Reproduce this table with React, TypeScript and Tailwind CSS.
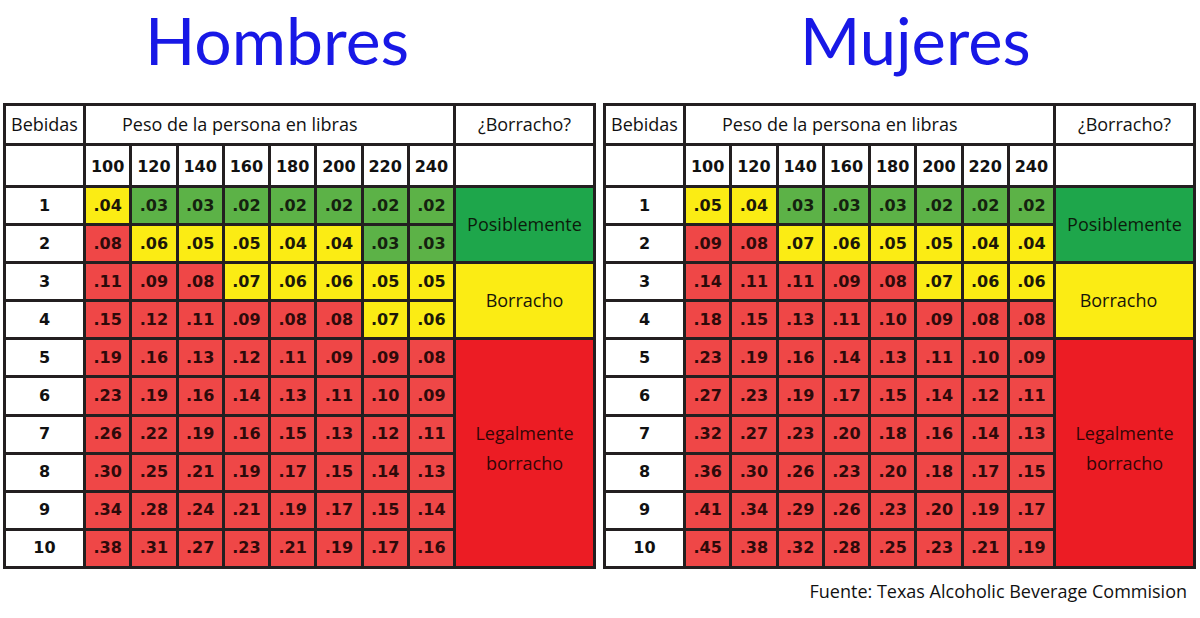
const WEIGHTS = ['100', '120', '140', '160', '180', '200', '220', '240'];

const MEN = [
  ['.04', '.03', '.03', '.02', '.02', '.02', '.02', '.02'],
  ['.08', '.06', '.05', '.05', '.04', '.04', '.03', '.03'],
  ['.11', '.09', '.08', '.07', '.06', '.06', '.05', '.05'],
  ['.15', '.12', '.11', '.09', '.08', '.08', '.07', '.06'],
  ['.19', '.16', '.13', '.12', '.11', '.09', '.09', '.08'],
  ['.23', '.19', '.16', '.14', '.13', '.11', '.10', '.09'],
  ['.26', '.22', '.19', '.16', '.15', '.13', '.12', '.11'],
  ['.30', '.25', '.21', '.19', '.17', '.15', '.14', '.13'],
  ['.34', '.28', '.24', '.21', '.19', '.17', '.15', '.14'],
  ['.38', '.31', '.27', '.23', '.21', '.19', '.17', '.16'],
];

const WOMEN = [
  ['.05', '.04', '.03', '.03', '.03', '.02', '.02', '.02'],
  ['.09', '.08', '.07', '.06', '.05', '.05', '.04', '.04'],
  ['.14', '.11', '.11', '.09', '.08', '.07', '.06', '.06'],
  ['.18', '.15', '.13', '.11', '.10', '.09', '.08', '.08'],
  ['.23', '.19', '.16', '.14', '.13', '.11', '.10', '.09'],
  ['.27', '.23', '.19', '.17', '.15', '.14', '.12', '.11'],
  ['.32', '.27', '.23', '.20', '.18', '.16', '.14', '.13'],
  ['.36', '.30', '.26', '.23', '.20', '.18', '.17', '.15'],
  ['.41', '.34', '.29', '.26', '.23', '.20', '.19', '.17'],
  ['.45', '.38', '.32', '.28', '.25', '.23', '.21', '.19'],
];

const sans = "font-['Open_Sans',sans-serif] text-[18px]";
const num = "font-['DejaVu_Sans',sans-serif] font-bold text-[16px]";

// <.04 verde, .04-.07 amarillo, >=.08 rojo
function cellColor(v: string) {
  const n = parseFloat(v);
  if (n < 0.035) return 'bg-[#5cb247] text-[#15210f]';
  if (n < 0.075) return 'bg-[#fbec14] text-[#1c1808]';
  return 'bg-[#ef4747] text-[#2e0a0a]';
}

function BacTable({ data, borrachoPad }: { data: string[][]; borrachoPad: string }) {
  return (
    <div className="grid w-[593px] grid-cols-[77px_repeat(8,minmax(0,1fr))_137px] grid-rows-[37px_39px_repeat(10,35.1px)] gap-[3px] bg-[#231f20] p-[3px]">
      {/* cabecera */}
      <div className={`flex items-center justify-center bg-white text-[#111] ${sans}`}>Bebidas</div>
      <div className={`col-span-8 flex items-center bg-white pl-[36px] text-[#111] ${sans}`}>
        Peso de la persona en libras
      </div>
      <div className={`flex items-center justify-center bg-white text-[#111] ${sans}`}>¿Borracho?</div>

      <div className="bg-white" />
      {WEIGHTS.map((w) => (
        <div key={w} className={`flex items-center justify-center bg-white pt-[3px] text-[#111] ${num}`}>
          {w}
        </div>
      ))}
      <div className="bg-white" />

      {data.map((row, i) => (
        <Row key={i} idx={i} row={row} borrachoPad={borrachoPad} />
      ))}
    </div>
  );
}

function Row({ idx, row, borrachoPad }: { idx: number; row: string[]; borrachoPad: string }) {
  return (
    <>
      <div className={`flex items-center justify-center bg-white text-[#111] ${num}`}>{idx + 1}</div>
      {row.map((v, j) => (
        <div key={j} className={`flex items-center justify-center ${cellColor(v)} ${num}`}>
          {v}
        </div>
      ))}
      {idx === 0 && (
        <div className={`row-span-2 flex items-center justify-center bg-[#1ea64b] text-[#0c1c0b] ${sans}`}>
          Posiblemente
        </div>
      )}
      {idx === 2 && (
        <div className={`row-span-2 flex items-center justify-center bg-[#fbec14] text-[#17140a] ${sans} ${borrachoPad}`}>
          Borracho
        </div>
      )}
      {idx === 4 && (
        <div className={`row-span-6 flex items-center justify-center bg-[#ec1c24] pb-[10px] text-center leading-[30px] text-[#330606] ${sans}`}>
          Legalmente
          <br />
          borracho
        </div>
      )}
    </>
  );
}

export default function App() {
  return (
    <div className="h-[618px] w-[1200px] overflow-hidden bg-white">
      <div className="flex h-[103px]">
        <div className="w-[600px] pl-[145px]">
          <h1 className="font-['Lato',sans-serif] text-[66px] font-normal leading-[80px] text-[#1818e6]">Hombres</h1>
        </div>
        <div className="w-[600px] pl-[200px]">
          <h1 className="font-['Lato',sans-serif] text-[65px] font-normal leading-[80px] text-[#1818e6]">Mujeres</h1>
        </div>
      </div>

      <div className="flex gap-[7px] pl-[3px]">
        <BacTable data={MEN} borrachoPad="" />
        <BacTable data={WOMEN} borrachoPad="pr-[12px]" />
      </div>

      <div className={`flex justify-end pr-[13px] pt-[9px] text-[#111] ${sans}`}>
        Fuente: Texas Alcoholic Beverage Commision
      </div>
    </div>
  );
}
